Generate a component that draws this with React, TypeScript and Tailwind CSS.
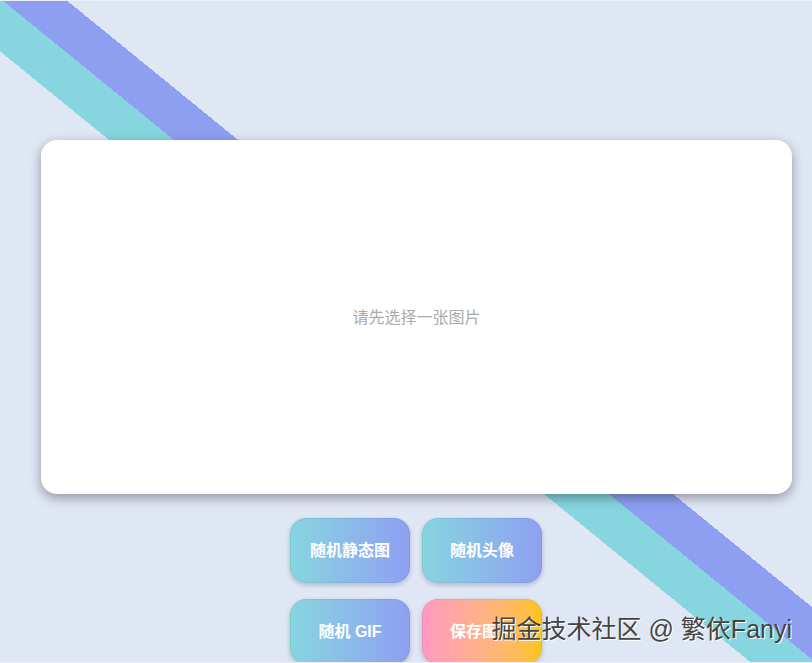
const buttons = [
  { label: '随机静态图', save: false },
  { label: '随机头像', save: false },
  { label: '随机 GIF', save: false },
  { label: '保存图片', save: true },
];

export default function App() {
  return (
    <div className="relative h-[663px] overflow-hidden border-y border-[#eaeef8] bg-[linear-gradient(to_top_right,#dfe6f4_46.2%,#86d5df_46.2%,#86d5df_50.2%,#8e9ff2_50.2%,#8e9ff2_54.15%,#dfe6f4_54.15%)] pt-[139px] pl-[41px] pr-[20px] font-['Liberation_Sans','Noto_Sans_CJK_SC',sans-serif]">
      <div className="flex h-[354px] items-center justify-center rounded-2xl bg-white shadow-[0_4px_12px_rgba(0,0,0,0.35)]">
        <p className="pt-0.5 text-base text-[#aaaaaa]">请先选择一张图片</p>
      </div>

      <div className="mt-6 ml-[249px] grid w-[252px] grid-cols-2 gap-x-3 gap-y-4">
        {buttons.map((b) => (
          <button
            key={b.label}
            className={
              b.save
                ? 'h-[65px] rounded-2xl border border-black/5 bg-gradient-to-r from-[#ff9ac1] to-[#ffc400] bg-origin-border text-base font-bold text-white shadow-[0_2px_5px_rgba(0,0,0,0.2)]'
                : 'h-[65px] rounded-2xl border border-black/5 bg-gradient-to-r from-[#86d5df] to-[#8e9ff2] bg-origin-border text-base font-bold text-white shadow-[0_2px_5px_rgba(0,0,0,0.2)]'
            }
          >
            {b.label}
          </button>
        ))}
      </div>

      <div className="absolute right-5 bottom-[17px] text-[25px] leading-8 text-[#444444] [text-shadow:1px_1px_0_#fff]">
        掘金技术社区 @ 繁依Fanyi
      </div>
    </div>
  );
}
